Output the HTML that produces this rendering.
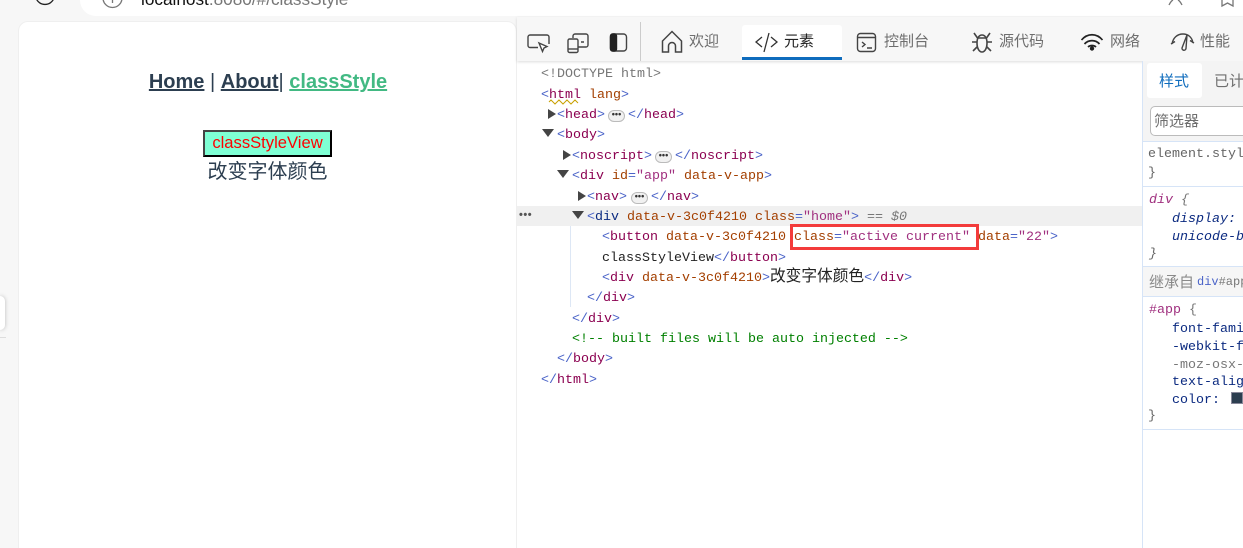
<!DOCTYPE html>
<html><head><meta charset="utf-8">
<style>
*{box-sizing:border-box}
html,body{margin:0;padding:0;width:1243px;height:548px;overflow:hidden;background:#f7f7f7;position:relative}
.a{position:absolute}
.l{position:absolute;font:13.33px/20px "Liberation Mono","Noto Sans CJK SC",monospace;white-space:pre;color:#222;height:20px}
.t{color:#8b0050}.n{color:#4a63c8}.k{color:#a33f00}.v{color:#a0307f}.g{color:#777}.c{color:#008000}
.cj{font:15.7px/0 "Noto Sans CJK SC",sans-serif}
.s{position:absolute;font:13.33px/20px "Liberation Mono",monospace;white-space:pre;color:#0b2a80;height:20px}
.i{font-style:italic}
.tab{position:absolute;font:15px/22px "Liberation Sans","Noto Sans CJK SC",sans-serif;color:#6e6e6e;white-space:pre}
svg{position:absolute;overflow:visible}
.tri{position:absolute;width:0;height:0}
.r{border-top:5.5px solid transparent;border-bottom:5.5px solid transparent;border-left:8px solid #444}
.d{border-left:6px solid transparent;border-right:6px solid transparent;border-top:8px solid #444}
.dots{position:absolute;width:17px;height:12px;border:1px solid #bbb;border-radius:6px;background:#f1f1f1;font:bold 9px/7px "Liberation Sans",sans-serif;text-align:center;color:#333;letter-spacing:0}
</style></head><body>
<!-- browser top -->
<div class="a" style="left:80px;top:-10px;width:1170px;height:26px;background:#fff;border-radius:0 0 0 16px"></div>
<svg style="left:0;top:0" width="1243" height="17" fill="none" stroke="#333" stroke-width="1.3"><path d="M36 -2a9.500 9.500 0 0 0 18 0" stroke="#222"/><path d="M103 -2a9.500 9.500 0 0 0 19 0M112.500 0v3" stroke="#777"/><path d="M1169 5c1-2 2-4 4-5M1182 5c-1-2-2-4-4-5" stroke="#777"/><path d="M1222 0v6l5.500-3 5.500 3V0" stroke="#777"/></svg>
<div class="a" style="left:141px;top:-9px;font:17.2px/16px 'Liberation Sans',sans-serif;color:#111;white-space:pre">localhost<span style="color:#777">:8080/#/classStyle</span></div>

<!-- page pane -->
<div class="a" style="left:0;top:296px;width:5px;height:34px;background:#fff;border-radius:0 6px 6px 0;box-shadow:0 0 4px rgba(0,0,0,.25)"></div>
<div class="a" style="left:0;top:337px;width:6px;height:1px;background:#ddd"></div>
<div class="a" style="left:18px;top:21px;width:499px;height:540px;background:#fff;border:1px solid #efefef;border-radius:10px 10px 0 0"></div>
<div class="a" style="left:19.5px;top:70px;width:497px;text-align:center;font:bold 20px/24px 'Liberation Sans',sans-serif;color:#2c3e50;white-space:pre"><u>Home</u><span style="font-weight:400"> | </span><u>About</u><span style="font-weight:400">| </span><u style="color:#42b983">classStyle</u></div>
<div class="a" style="left:203px;top:130px;width:129px;height:27px;background:#7fffd4;border:2px solid;border-color:#444 #000 #000 #444;color:#f00;font:16.6px/21px 'Liberation Sans',sans-serif;text-align:center">classStyleView</div>
<div class="a" style="left:19px;top:159px;width:497px;text-align:center;font:20px/26px 'Liberation Sans','Noto Sans CJK SC',sans-serif;color:#2c3e50">改变字体颜色</div>

<!-- devtools -->
<div class="a" style="left:517px;top:61px;width:726px;height:487px;background:#fff"></div>
<div class="a" style="left:517px;top:17px;width:726px;height:44px;background:#f7f7f7;box-shadow:0 1px 3px rgba(0,0,0,.14)"></div>
<div class="a" style="left:640px;top:22px;width:1px;height:39px;background:#ccc"></div>
<svg style="left:0;top:0" width="1243" height="60" fill="none" stroke="#444" stroke-width="1.4">
<path d="M538 47.500h-8a2 2 0 0 1-2-2V37a2 2 0 0 1 2-2h17a2 2 0 0 1 2 2v7"/><path d="M539 43l8 3.500-3 1.500-1.500 3.500z" fill="#fff"/>
<rect x="568" y="39" width="10" height="13.500" rx="1.500"/><path d="M568 49h10"/><path d="M573 38v-2a2 2 0 0 1 2-2h11a2 2 0 0 1 2 2v9a2 2 0 0 1-2 2h-8M581 42h3"/>
<rect x="610.500" y="34" width="16" height="17" rx="3"/><rect x="610.500" y="34" width="6" height="17" rx="2" fill="#222" stroke="#222"/>
<path d="M662.500 52V41L672 31.500 681.500 41v11h-6v-6a3.500 3.500 0 0 0-7 0v6z" stroke-width="1.500"/>
<rect x="857.500" y="33.500" width="18" height="18" rx="3"/><path d="M858 37.500h17M862 42l3 2.500-3 2.500M867 48h5"/>
<path d="M982 35c-3 0-5 3-5 8 0 5 2 9 5 9s5-4 5-9c0-5-2-8-5-8zM978 38h8M974 33l3.500 5M990 33l-3.500 5M972 42h5M992 42h-5M973 51l4-4M991 51l-4-4" stroke-width="1.600"/>
<path d="M1081.500 40c6-7 15-7 21 0M1084.500 44c4-4.500 11-4.500 15 0M1088 47c2-2 6-2 8 0" stroke="#222" stroke-width="1.700"/><circle cx="1092" cy="48.500" r="1.500" fill="#222" stroke="#222"/>
<path d="M1172 44c1-6 5-10 11-10 5 0 9 3 10 9M1171 44l4-2.500M1194 43l-4-2.500M1182 48l5-13-1 13.500a2 2 0 0 1-4-.5z"/>
</svg>
<div class="tab" style="left:689px;top:31px">欢迎</div>
<div class="a" style="left:742px;top:25px;width:100px;height:35px;background:#fff;border-bottom:3px solid #0f6cbd;border-radius:3px 3px 0 0"></div>
<svg style="left:0;top:0" width="900" height="60" fill="none" stroke="#333" stroke-width="1.300"><path d="M762 37l-6 5 6 5M771 37l6 5-6 5M769 33l-5 19"/></svg>
<div class="tab" style="left:784px;top:31px;color:#222">元素</div>
<div class="tab" style="left:884px;top:31px">控制台</div>
<div class="tab" style="left:999px;top:31px">源代码</div>
<div class="tab" style="left:1110px;top:31px">网络</div>
<div class="tab" style="left:1200px;top:31px">性能</div>

<!-- DOM tree -->
<div class="a" style="left:517px;top:206px;width:625px;height:20px;background:#f0f0f0"></div>
<div class="a" style="left:519px;top:208px;font:bold 11px/14px 'Liberation Sans',sans-serif;color:#555;letter-spacing:.5px">•••</div>
<div class="a" style="left:570px;top:226px;width:1px;height:81px;background:#dde7f5"></div>

<div class="l g" style="left:541px;top:65px">&lt;!DOCTYPE html&gt;</div>
<div class="l" style="left:541px;top:86px"><span class="n">&lt;</span><span class="t">html</span> <span class="k">lang</span><span class="n">&gt;</span></div>
<svg style="left:549px;top:100px" width="32" height="4" fill="none" stroke="#c8a000" stroke-width="1"><path d="M0 2l2-2 2 2 2 2 2-2 2-2 2 2 2 2 2-2 2-2 2 2 2 2 2-2 2-2 2 2 1 1"/></svg>
<div class="tri r" style="left:548px;top:109px"></div>
<div class="l" style="left:557px;top:106px"><span class="n">&lt;</span><span class="t">head</span><span class="n">&gt;</span></div>
<div class="dots" style="left:608px;top:110px">•••</div>
<div class="l" style="left:628px;top:106px"><span class="n">&lt;/</span><span class="t">head</span><span class="n">&gt;</span></div>
<div class="tri d" style="left:542px;top:129px"></div>
<div class="l" style="left:557px;top:126px"><span class="n">&lt;</span><span class="t">body</span><span class="n">&gt;</span></div>
<div class="tri r" style="left:563px;top:150px"></div>
<div class="l" style="left:572px;top:147px"><span class="n">&lt;</span><span class="t">noscript</span><span class="n">&gt;</span></div>
<div class="dots" style="left:655px;top:151px">•••</div>
<div class="l" style="left:675px;top:147px"><span class="n">&lt;/</span><span class="t">noscript</span><span class="n">&gt;</span></div>
<div class="tri d" style="left:557px;top:170px"></div>
<div class="l" style="left:572px;top:167px"><span class="n">&lt;</span><span class="t">div</span> <span class="k">id</span><span class="n">=</span><span class="v">"app"</span> <span class="k">data-v-app</span><span class="n">&gt;</span></div>
<div class="tri r" style="left:578px;top:191px"></div>
<div class="l" style="left:587px;top:188px"><span class="n">&lt;</span><span class="t">nav</span><span class="n">&gt;</span></div>
<div class="dots" style="left:631px;top:192px">•••</div>
<div class="l" style="left:651px;top:188px"><span class="n">&lt;/</span><span class="t">nav</span><span class="n">&gt;</span></div>
<div class="tri d" style="left:572px;top:211px"></div>
<div class="l" style="left:587px;top:208px"><span class="n">&lt;</span><span style="color:#0b2a80">div</span> <span class="k">data-v-3c0f4210</span> <span class="k">class</span><span class="n">=</span><span class="v">"home"</span><span class="n">&gt;</span> <span class="g i">== $0</span></div>
<div class="l" style="left:602px;top:228px"><span class="n">&lt;</span><span class="t">button</span> <span class="k">data-v-3c0f4210</span> <span class="k">class</span><span class="n">=</span><span class="v">"active current"</span> <span class="k">data</span><span class="n">=</span><span class="v">"22"</span><span class="n">&gt;</span></div>
<div class="l" style="left:602px;top:249px">classStyleView<span class="n">&lt;/</span><span class="t">button</span><span class="n">&gt;</span></div>
<div class="l" style="left:602px;top:269px"><span class="n">&lt;</span><span class="t">div</span> <span class="k">data-v-3c0f4210</span><span class="n">&gt;</span><span class="cj">改变字体颜色</span><span class="n">&lt;/</span><span class="t">div</span><span class="n">&gt;</span></div>
<div class="l" style="left:587px;top:289px"><span class="n">&lt;/</span><span class="t">div</span><span class="n">&gt;</span></div>
<div class="l" style="left:572px;top:310px"><span class="n">&lt;/</span><span class="t">div</span><span class="n">&gt;</span></div>
<div class="l c" style="left:572px;top:330px">&lt;!-- built files will be auto injected --&gt;</div>
<div class="l" style="left:557px;top:350px"><span class="n">&lt;/</span><span class="t">body</span><span class="n">&gt;</span></div>
<div class="l" style="left:541px;top:371px"><span class="n">&lt;/</span><span class="t">html</span><span class="n">&gt;</span></div>
<div class="a" style="left:790px;top:224px;width:189px;height:26px;border:3px solid #f33b3b"></div>

<!-- styles sidebar -->
<div class="a" style="left:1142px;top:61px;width:1px;height:487px;background:#d6e4f7"></div>
<div class="a" style="left:1143px;top:61px;width:100px;height:80px;background:#f4f4f4"></div>
<div class="a" style="left:1147px;top:63px;width:55px;height:35px;background:#fff;border-radius:3px"></div>
<div class="tab" style="left:1159px;top:71px;color:#0f6cbd">样式</div>
<div class="tab" style="left:1214px;top:71px">已计算</div>
<div class="a" style="left:1150px;top:106px;width:110px;height:30px;background:#fff;border:1px solid #bbb;border-radius:5px"></div>
<div class="tab" style="left:1154px;top:111px">筛选器</div>
<div class="a" style="left:1143px;top:141px;width:100px;height:1px;background:#d6e4f7"></div>
<div class="s g" style="left:1148px;top:145px;color:#666">element.style</div>
<div class="s g" style="left:1148px;top:164px;color:#666">}</div>
<div class="a" style="left:1143px;top:186px;width:100px;height:1px;background:#d6e4f7"></div>
<div class="s i" style="left:1149px;top:191px"><span class="v">div</span><span class="g"> {</span></div>
<div class="s i" style="left:1172px;top:210px">display:</div>
<div class="s i" style="left:1172px;top:228px">unicode-bidi</div>
<div class="s i g" style="left:1149px;top:245px;color:#666">}</div>
<div class="a" style="left:1143px;top:266px;width:100px;height:1px;background:#d6e4f7"></div>
<div class="a" style="left:1143px;top:267px;width:100px;height:29px;background:#f6f6f6"></div>
<div class="a" style="left:1143px;top:296px;width:100px;height:1px;background:#d6e4f7"></div>
<div class="tab" style="left:1149px;top:272px;color:#8a8a8a">继承自</div>
<div class="s" style="left:1197px;top:272px;font-size:12px;color:#777"><span class="n">div</span>#app</div>
<div class="s" style="left:1149px;top:301px"><span class="v">#app</span><span class="g"> {</span></div>
<div class="s" style="left:1172px;top:320px">font-family</div>
<div class="s" style="left:1172px;top:338px">-webkit-font</div>
<div class="s" style="left:1172px;top:356px;color:#777">-moz-osx-fon</div>
<div class="s" style="left:1172px;top:373px">text-align</div>
<div class="s" style="left:1172px;top:391px">color:</div>
<div class="a" style="left:1231px;top:392px;width:12px;height:12px;background:#2c3e50;border:1px solid #889"></div>
<div class="s" style="left:1148px;top:407px;color:#666">}</div>
<div class="a" style="left:1143px;top:429px;width:100px;height:1px;background:#d6e4f7"></div>
</body></html>
